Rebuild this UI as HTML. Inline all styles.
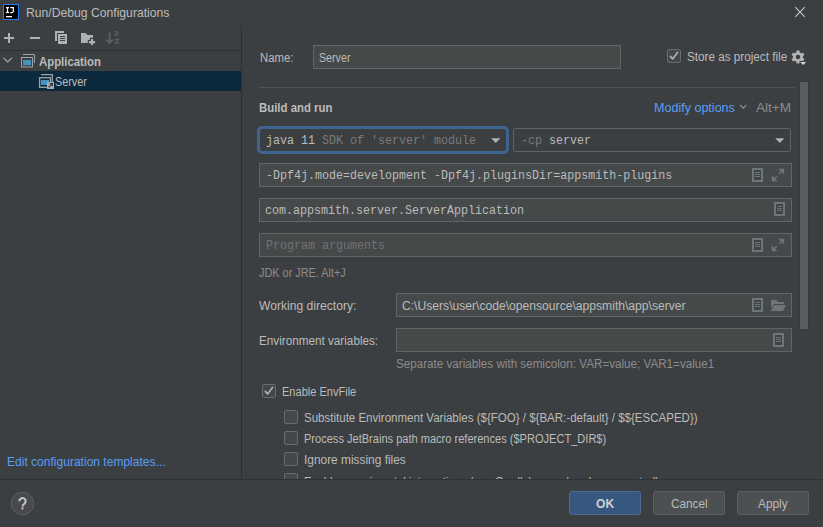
<!DOCTYPE html>
<html><head><meta charset="utf-8">
<style>
*{margin:0;padding:0;box-sizing:border-box}
html,body{width:823px;height:527px;overflow:hidden;background:#3C3F41}
body{position:relative;font-family:"Liberation Sans",sans-serif;font-size:12px;color:#BBBBBB}
.a{position:absolute;white-space:nowrap;transform-origin:0 0}
svg.a{overflow:visible}
.mono{font-family:"Liberation Mono",monospace;font-size:12.5px;transform:scaleX(0.9336)}
.fld{position:absolute;background:#45494A;border:1px solid #646464}
.cb{position:absolute;width:14px;height:14px;border:1px solid #6B6B6B;border-radius:2px;background:#43494A}
.link{color:#589DF6}
.gray{color:#8C8C8C}
.btn{position:absolute;height:24px;width:72px;border:1px solid #5E6060;border-radius:3px;background:#4C5052}
.ln{position:absolute}
</style></head><body>

<!-- ============ title bar ============ -->
<svg class="a" style="left:3px;top:4px" width="16" height="16" viewBox="0 0 16 16">
  <rect x="0.5" y="0.5" width="15" height="15" fill="#000" stroke="#1C7FF5" stroke-width="1"/>
  <rect x="3" y="3" width="3" height="1.3" fill="#fff"/>
  <rect x="3" y="7.8" width="3" height="1.3" fill="#fff"/>
  <rect x="3.9" y="3" width="1.2" height="6" fill="#fff"/>
  <path d="M7.2 3.6H10.3V7.3Q10.3 8.5 9 8.5H7.2" fill="none" stroke="#fff" stroke-width="1.25"/>
  <rect x="3" y="12" width="6" height="1.3" fill="#fff"/>
</svg>
<div class="a" style="left:26px;top:5px;font-size:13px;transform:scaleX(0.936)">Run/Debug Configurations</div>
<svg class="a" style="left:794px;top:6px" width="12" height="12" viewBox="0 0 12 12"><path d="M1.2 1.2L10.8 10.8M10.8 1.2L1.2 10.8" stroke="#C8C8C8" stroke-width="1.1"/></svg>

<!-- ============ left panel ============ -->
<div class="ln" style="left:241px;top:26px;width:1px;height:454px;background:#2D2F31"></div>
<div class="ln" style="left:0;top:50px;width:241px;height:1px;background:#2F3133"></div>

<!-- toolbar icons -->
<svg class="a" style="left:0;top:26px" width="124" height="24" viewBox="0 0 124 24">
  <g fill="#AFB1B3">
    <rect x="4" y="11" width="10" height="2"/>
    <rect x="8" y="7" width="2" height="10"/>
    <rect x="30" y="11" width="10" height="2"/>
    <!-- copy -->
    <path d="M55 5H64V7H57V15H55Z"/>
    <path d="M58 8H67V18H58ZM60 10V11H65V10ZM60 12V13H65V12ZM60 14V15H65V14Z" fill-rule="evenodd"/>
    <!-- folder -->
    <path d="M81 7H85.5L87.5 9H93V17H81Z"/>
  </g>
  <path d="M90.9 12.9H93V15.1H95.1V17.2H93V19.1H90.9V17.2H88.9V15.1H90.9Z" fill="#3C3F41" stroke="#3C3F41" stroke-width="2.2"/>
  <path d="M90.9 12.9H93V15.1H95.1V17.2H93V19.1H90.9V17.2H88.9V15.1H90.9Z" fill="#AFB1B3"/>
  <path d="M109.6 6.3V17M106.4 13.7L109.6 16.9L112.8 13.7" fill="none" stroke="#5E6164" stroke-width="1.7"/>
  <text x="114" y="10.4" font-family="Liberation Sans" font-size="8.2" fill="#64676A">a</text>
  <path d="M114.6 12.7H119.2V13.8L115.7 16.5H119.3V17.6H114.4V16.5L117.9 13.8H114.6Z" fill="#64676A"/>
</svg>

<!-- tree -->
<div class="ln" style="left:0;top:71px;width:241px;height:20px;background:#0D293E"></div>
<svg class="a" style="left:0;top:51px" width="60" height="40" viewBox="0 0 60 40">
  <path d="M3.5 6.8L7.7 11L11.9 6.8" fill="none" stroke="#A9ABAD" stroke-width="1.1"/>
  <!-- application icon -->
  <path d="M23 3.5H34.5V12" fill="none" stroke="#9BA5AC" stroke-width="1"/>
  <rect x="21.5" y="6.5" width="11" height="9.5" fill="#3C3F41" stroke="#9BA5AC" stroke-width="1"/>
  <rect x="23" y="9" width="8" height="5.3" fill="#4294BC"/>
  <!-- server icon -->
  <path d="M41 23.7H52.3V31" fill="none" stroke="#9BA5AC" stroke-width="1.3"/>
  <rect x="39.6" y="26.7" width="10.8" height="9.6" fill="#0D293E" stroke="#9BA5AC" stroke-width="1.3"/>
  <rect x="41" y="29" width="8" height="5" fill="#4294BC"/>
  <rect x="47" y="31" width="7" height="7" fill="#A5ADB3"/>
  <path d="M48.6 36.4L52.2 32.8M49.8 32.6H52.4V35.2" fill="none" stroke="#2E3438" stroke-width="1.1"/>
</svg>
<div class="a" style="left:39px;top:55px;font-weight:bold;font-size:12.5px;transform:scaleX(0.909)">Application</div>
<div class="a" style="left:55px;top:75px;font-size:12px;transform:scaleX(0.90)">Server</div>
<div class="a link" style="left:7px;top:455px;font-size:12.5px;transform:scaleX(0.963)">Edit configuration templates...</div>

<!-- ============ bottom ============ -->
<div class="ln" style="left:0;top:479px;width:823px;height:1px;background:#2F3133"></div>
<svg class="a" style="left:10px;top:491px" width="25" height="25" viewBox="0 0 25 25">
  <circle cx="12.5" cy="12.5" r="11.3" fill="#47494C" stroke="#5C5F62" stroke-width="1"/>
  <path d="M9.3 10.3A3.2 3.2 0 1 1 14.3 12.9Q12.5 13.8 12.5 15.5" fill="none" stroke="#C4C6C8" stroke-width="2"/>
  <rect x="11.45" y="16.3" width="2.1" height="2.1" fill="#C4C6C8"/>
</svg>
<div class="btn" style="left:569px;top:491px;background:#365880;border-color:#4A6D94"></div>
<div class="btn" style="left:653px;top:491px"></div>
<div class="btn" style="left:737px;top:491px"></div>
<div class="a" style="left:596px;top:497px;font-weight:bold;font-size:12.5px;color:#D0D0D0;transform:scaleX(0.967)">OK</div>
<div class="a" style="left:671px;top:497px;font-size:12.5px;transform:scaleX(0.94)">Cancel</div>
<div class="a" style="left:758px;top:497px;font-size:12.5px;transform:scaleX(0.947)">Apply</div>

<!-- ============ right panel ============ -->
<div class="a" style="left:260px;top:51px;transform:scaleX(0.943)">Name:</div>
<div class="fld" style="left:313px;top:45px;width:308px;height:24px"></div>
<div class="a" style="left:319px;top:51px;transform:scaleX(0.89)">Server</div>
<div class="cb" style="left:667px;top:49px"></div>
<svg class="a" style="left:667px;top:49px" width="14" height="14" viewBox="0 0 14 14"><path d="M3.4 7.4L5.6 9.9L10.5 3.5" fill="none" stroke="#B0B0B0" stroke-width="1.7" stroke-linecap="round" stroke-linejoin="round"/></svg>
<div class="a" style="left:687px;top:50px;transform:scaleX(0.975)">Store as project file</div>
<svg class="a" style="left:790px;top:49px" width="18" height="18" viewBox="0 0 18 18">
  <g transform="translate(8,8)">
    <path fill="#AFB1B3" fill-rule="evenodd" d="M-1.4 -6.4H1.4L1.8 -4.6L3.2 -3.8L5 -4.4L6.4 -2L5 -0.8V0.8L6.4 2L5 4.4L3.2 3.8L1.8 4.6L1.4 6.4H-1.4L-1.8 4.6L-3.2 3.8L-5 4.4L-6.4 2L-5 0.8V-0.8L-6.4 -2L-5 -4.4L-3.2 -3.8L-1.8 -4.6Z M0 -2.2A2.2 2.2 0 1 0 0 2.2A2.2 2.2 0 1 0 0 -2.2Z"/>
  </g>
  <path d="M9.2 12.3H17.1L13.15 16.8Z" fill="#3C3F41"/><path d="M10.1 13.1H16.2L13.15 16.1Z" fill="#D4D4D4"/>
</svg>

<div class="ln" style="left:259px;top:87px;width:536px;height:1px;background:#515355"></div>
<div class="ln" style="left:800px;top:82px;width:8px;height:247px;background:#5A5C5E;box-shadow:0 0 0 1px #37393B"></div>

<div class="a" style="left:259px;top:101px;font-weight:bold;font-size:12.5px;transform:scaleX(0.911)">Build and run</div>
<div class="a link" style="left:654px;top:101px;transform:scaleX(1.045)">Modify options</div>
<svg class="a" style="left:739px;top:104px" width="9" height="7" viewBox="0 0 9 7"><path d="M1.1 1.1L4.2 4.2L7.3 1.1" fill="none" stroke="#929496" stroke-width="1.3"/></svg>
<div class="a gray" style="left:756px;top:101px;transform:scaleX(1.127)">Alt+M</div>

<!-- JRE combo (focused) -->
<div class="ln" style="left:257px;top:126px;width:252px;height:28px;border:3px solid #3D6590;border-radius:5px;background:#3C3F41"></div>
<div class="a mono" style="left:266px;top:134px">java 11 <span style="color:#7A7A7A">SDK of 'server' module</span></div>
<svg class="a" style="left:490px;top:137px" width="12" height="7" viewBox="0 0 12 7"><path d="M1.2 1.3H10.4L5.8 6Z" fill="#AFB1B3"/></svg>
<!-- -cp combo -->
<div class="ln" style="left:513px;top:128px;width:278px;height:24px;border:1px solid #646464;border-radius:3px;background:#3C3F41"></div>
<div class="a mono" style="left:521px;top:134px"><span style="color:#7A7A7A">-cp</span> server</div>
<svg class="a" style="left:774px;top:137px" width="12" height="7" viewBox="0 0 12 7"><path d="M1.2 1.3H10.4L5.8 6Z" fill="#AFB1B3"/></svg>

<!-- VM options -->
<div class="fld" style="left:259px;top:163px;width:533px;height:24px"></div>
<div class="a mono" style="left:266px;top:169px">-Dpf4j.mode=development -Dpf4j.pluginsDir=appsmith-plugins</div>
<!-- main class -->
<div class="fld" style="left:259px;top:198px;width:533px;height:24px"></div>
<div class="a mono" style="left:265px;top:204px">com.appsmith.server.ServerApplication</div>
<!-- program args -->
<div class="fld" style="left:259px;top:233px;width:533px;height:24px"></div>
<div class="a mono" style="left:266px;top:239px;color:#727272">Program arguments</div>

<div class="a gray" style="left:259px;top:266px;transform:scaleX(0.907)">JDK or JRE. Alt+J</div>

<div class="a" style="left:259px;top:299px;transform:scaleX(1.01)">Working directory:</div>
<div class="fld" style="left:396px;top:293px;width:396px;height:24px"></div>
<div class="a" style="left:402px;top:299px;transform:scaleX(1.01)">C:\Users\user\code\opensource\appsmith\app\server</div>
<div class="a" style="left:259px;top:334px;transform:scaleX(0.976)">Environment variables:</div>
<div class="fld" style="left:396px;top:328px;width:396px;height:24px"></div>
<div class="a gray" style="left:396px;top:357px;transform:scaleX(0.971)">Separate variables with semicolon: VAR=value; VAR1=value1</div>

<!-- field icons -->
<svg class="a" style="left:0;top:0" width="823" height="400" viewBox="0 0 823 400">
  <defs>
    <g id="doc">
      <rect x="1" y="1" width="9" height="12" fill="#3F4446" stroke="#6E7578" stroke-width="2"/>
      <rect x="3" y="4" width="5" height="1" fill="#6E7578"/>
      <rect x="3" y="6" width="5" height="1" fill="#6E7578"/>
      <rect x="3" y="8" width="5" height="1" fill="#6E7578"/>
    </g>
    <g id="exp" fill="#6E7578">
      <path d="M6.6 0H12.4V5.8Z"/>
      <path d="M0 6.6V12.4H5.8Z"/>
      <path d="M10.2 2.2L7.2 5.2M2.2 10.2L5.2 7.2" stroke="#6E7578" stroke-width="1.15"/>
    </g>
  </defs>
  <use href="#doc" x="752" y="168"/>
  <use href="#exp" x="771.8" y="168.8"/>
  <use href="#doc" x="774" y="202"/>
  <use href="#doc" x="752" y="238"/>
  <use href="#exp" x="771.8" y="238.8"/>
  <use href="#doc" x="752" y="298"/>
  <use href="#doc" x="773" y="333"/>
  <g fill="#6E7577">
    <path d="M771 300H776.7L777.7 302H784V304H774L771 308Z"/>
    <path d="M773.6 305H786L783 311H771Z"/>
  </g>
</svg>

<!-- checkboxes -->
<div class="cb" style="left:262px;top:384px"></div>
<svg class="a" style="left:262px;top:384px" width="14" height="14" viewBox="0 0 14 14"><path d="M3.4 7.4L5.6 9.9L10.5 3.5" fill="none" stroke="#B0B0B0" stroke-width="1.7" stroke-linecap="round" stroke-linejoin="round"/></svg>
<div class="a" style="left:282px;top:385px;transform:scaleX(0.92)">Enable EnvFile</div>
<div class="cb" style="left:284px;top:410px"></div>
<div class="a" style="left:304px;top:411px;transform:scaleX(0.96)">Substitute Environment Variables (${FOO} / ${BAR:-default} / $${ESCAPED})</div>
<div class="cb" style="left:284px;top:431px"></div>
<div class="a" style="left:304px;top:432px;transform:scaleX(0.921)">Process JetBrains path macro references ($PROJECT_DIR$)</div>
<div class="cb" style="left:284px;top:452px"></div>
<div class="a" style="left:304px;top:453px;transform:scaleX(0.991)">Ignore missing files</div>
<!-- cut-off row -->
<div style="position:absolute;left:242px;top:466px;width:556px;height:13px;overflow:hidden">
  <div class="cb" style="left:42px;top:7px"></div>
  <div class="a" style="left:62px;top:9px;transform:scaleX(0.93)">Enable experimental integrations (e.g. Gradle) - may break unexpectedly</div>
</div>

</body></html>
